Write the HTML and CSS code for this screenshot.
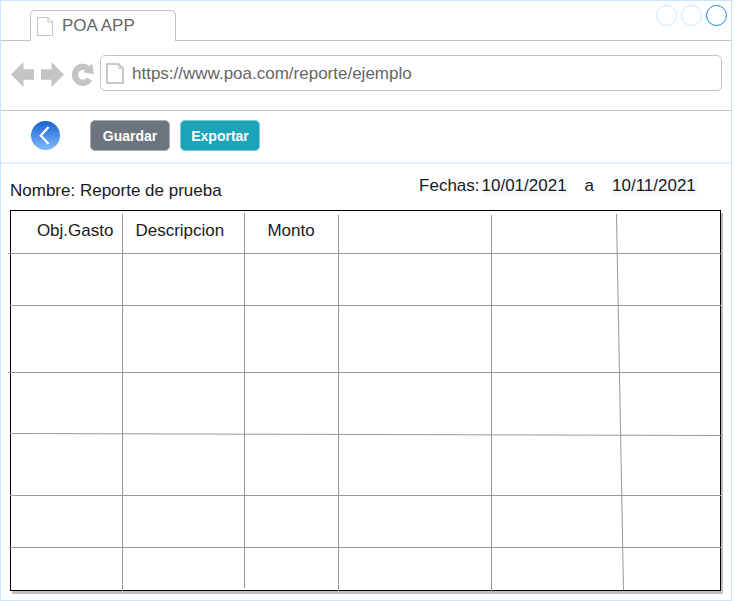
FILE: index.html
```html
<!DOCTYPE html>
<html lang="es">
<head>
<meta charset="utf-8">
<meta name="viewport" content="width=device-width, initial-scale=1">
<title>POA APP</title>
<link rel="stylesheet" href="styles.css">
</head>
<body>
<div class="window">
  <div class="tab-strip">
    <div class="tab">
      <svg class="tab-icon" width="16" height="19" viewBox="0 0 16 19" aria-hidden="true"><path d="M.5.5h10.500l4.500 4.500v13.500h-15zM11 .5v4.500h4.500" fill="#fff" stroke="#c4c4c4"/></svg>
      <span>POA APP</span>
    </div>
    <div class="window-controls">
      <button class="dot" type="button" aria-label="Minimizar"></button>
      <button class="dot" type="button" aria-label="Maximizar"></button>
      <button class="dot dot-active" type="button" aria-label="Cerrar"></button>
    </div>
  </div>

  <div class="nav-bar">
    <div class="nav-buttons">
      <button class="icon-button" type="button" aria-label="Atrás"><svg width="23" height="25" viewBox="0 0 23 25"><path d="M0 12.500L12.500 0v7.300H23v10.400H12.500V25z" fill="#c4c4c4"/></svg></button>
      <button class="icon-button" type="button" aria-label="Adelante"><svg width="23" height="25" viewBox="0 0 23 25"><path d="M23 12.500L10.500 0v7.300H0v10.400h10.500V25z" fill="#c4c4c4"/></svg></button>
      <button class="icon-button" type="button" aria-label="Recargar"><svg width="23" height="25" viewBox="0 0 23 25"><path d="M16.500 6.200A8 8 0 1 0 18.600 17.200" fill="none" stroke="#c4c4c4" stroke-width="6.200"/><path d="M21 1.600L22.900 12.300 12 10.300z" fill="#c4c4c4"/></svg></button>
    </div>
    <div class="address">
      <svg class="address-icon" width="18" height="21" viewBox="0 0 18 21" aria-hidden="true"><path d="M1 1h11.500L17 5.500V20H1z" fill="#fff" stroke="#c8c8c8" stroke-width="2"/><path d="M12.500 1v4.500H17" fill="none" stroke="#c8c8c8"/></svg>
      <input class="address-input" type="text" aria-label="Dirección" value="https://www.poa.com/reporte/ejemplo">
    </div>
  </div>

  <div class="toolbar">
    <button class="icon-button" type="button" aria-label="Volver"><svg width="29" height="29" viewBox="0 0 29 29"><defs><linearGradient id="back-fill" x1="0" y1="0" x2="0" y2="1"><stop offset="0" stop-color="#1661cf"/><stop offset="1" stop-color="#84b9ff"/></linearGradient></defs><circle cx="14.500" cy="14.500" r="14.500" fill="url(#back-fill)"/><path d="M17.600 6L9.800 14.500l7.800 8.500" fill="none" stroke="#fff" stroke-width="2.200"/></svg></button>
    <div class="actions">
      <button class="button button-save" type="button">Guardar</button>
      <button class="button button-export" type="button">Exportar</button>
    </div>
  </div>

  <main class="report">
    <div class="report-info">
      <div class="report-name">Nombre: Reporte de prueba</div>
      <div class="dates">
        <label for="date-from">Fechas:</label>
        <input class="date" id="date-from" type="text" value="10/01/2021">
        <label class="date-to-label" for="date-to">a</label>
        <input class="date" id="date-to" type="text" value="10/11/2021">
      </div>
    </div>

    <div class="sheet">
      <table class="grid">
        <colgroup><col class="col-code"><col class="col-description"><col class="col-amount"><col class="col-wide"><col class="col-medium"><col></colgroup>
        <thead>
          <tr class="row-head"><th class="right" scope="col">Obj.Gasto</th><th scope="col">Descripcion</th><th class="center" scope="col">Monto</th><td></td><td></td><td></td></tr>
        </thead>
        <tbody>
          <tr class="row-short"><td></td><td></td><td></td><td></td><td></td><td></td></tr>
          <tr class="row-tall"><td></td><td></td><td></td><td></td><td></td><td></td></tr>
          <tr class="row-medium"><td></td><td></td><td></td><td></td><td></td><td></td></tr>
          <tr class="row-medium"><td></td><td></td><td></td><td></td><td></td><td></td></tr>
          <tr class="row-short"><td></td><td></td><td></td><td></td><td></td><td></td></tr>
          <tr class="row-last"><td></td><td></td><td></td><td></td><td></td><td></td></tr>
        </tbody>
      </table>
      <!-- Hand-ruled grid lines: some overshoot the frame and two lean slightly -->
      <svg class="rules" viewBox="0 0 711 381" preserveAspectRatio="none" aria-hidden="true">
        <path d="M-2 43.500H712M0 95.500H711M-2 162.500H710M0 223.500L713 225.500M0 285.500H711M-1 337.500H711"/>
        <path d="M112.500 4V381M234.500 3V378M328.500 5V381M481.500 5V382M606.500 4L613.500 380"/>
      </svg>
    </div>
  </main>
</div>
</body>
</html>
```
FILE: styles.css
```css
* {
  box-sizing: border-box;
}

body {
  margin: 0;
  padding-right: 4px;
  background: #fff;
  color: #1a1a1a;
  font: 17px/20px "Liberation Sans", Arial, sans-serif;
}

button,
input {
  margin: 0;
  padding: 0;
  border: 0;
  background: none;
  color: inherit;
  font: inherit;
}

svg {
  display: block;
}

.window {
  min-height: 100vh;
  border: 1px solid #cce5ff;
}

.tab-strip {
  display: flex;
  justify-content: space-between;
  align-items: flex-start;
  height: 40px;
  padding: 0 4px 0 29px;
  border-bottom: 1px solid #c4c4c4;
}

.tab {
  display: flex;
  gap: 9px;
  width: 146px;
  height: 31px;
  margin-top: 9px;
  padding: 5px 6px;
  border: 1px solid #c4c4c4;
  border-bottom: 0;
  border-radius: 5px 5px 0 0;
  background: #fff;
  color: #666;
}

.tab-icon {
  margin-top: 1px;
}

.window-controls {
  display: flex;
  gap: 4px;
  padding-top: 4px;
}

.dot {
  width: 21px;
  height: 21px;
  border: 1px solid #cce5ff;
  border-radius: 50%;
}

.dot-active {
  border-color: #0c88f5;
}

.nav-bar {
  display: flex;
  align-items: center;
  gap: 6px;
  padding: 14px 9px 19px 10px;
  border-bottom: 1px solid #c4c4c4;
}

.nav-buttons {
  display: flex;
  gap: 7px;
  padding-top: 2px;
}

.address {
  display: flex;
  flex: 1;
  align-items: center;
  gap: 8px;
  height: 36px;
  padding: 0 5px;
  border: 1px solid #c4c4c4;
  border-radius: 5px;
}

.address-input {
  flex: 1;
  min-width: 0;
  height: 22px;
  padding-top: 2px;
  color: #666;
}

.toolbar {
  display: flex;
  align-items: center;
  gap: 30px;
  padding: 9px 30px 11px;
  border-bottom: 2px solid #e3f0ff;
}

.actions {
  display: flex;
  gap: 10px;
}

.button {
  width: 80px;
  height: 31px;
  border: 1px solid #a6adb3;
  border-radius: 5px;
  color: #fff;
  font-size: 14px;
  font-weight: bold;
}

.button-save {
  background: #6c757d;
}

.button-export {
  border-color: #7cc9d4;
  background: #1da4b8;
}

.report {
  padding: 0 10px 9px 9px;
}

.report-info {
  display: flex;
  justify-content: space-between;
  height: 46px;
}

.report-name {
  padding-top: 17px;
}

.dates {
  display: flex;
  align-items: flex-start;
  padding: 12px 24px 0 0;
}

.date {
  width: 85px;
  height: 20px;
  margin-left: 2px;
  background: #f8f9fa;
}

.date-to-label {
  margin: 0 16px 0 18px;
}

.sheet {
  position: relative;
  border: 1px solid #000;
  box-shadow: 2px 3px 0 #bfbfbf;
}

.grid {
  width: 100%;
  border-collapse: collapse;
  table-layout: fixed;
}

.grid th {
  padding: 0 11px 4px;
  font-weight: normal;
  text-align: left;
}

.grid .right {
  text-align: right;
}

.grid .center {
  text-align: center;
}

.grid td {
  padding: 0;
}

.col-code {
  width: 16%;
}

.col-description {
  width: 17%;
}

.col-amount {
  width: 13%;
}

.col-wide {
  width: 22%;
}

.col-medium {
  width: 18%;
}

.row-head {
  height: 43px;
}

.row-short {
  height: 52px;
}

.row-tall {
  height: 67px;
}

.row-medium {
  height: 61px;
}

.row-last {
  height: 43px;
}

.rules {
  position: absolute;
  top: -1px;
  left: -1px;
  width: calc(100% + 2px);
  height: calc(100% + 2px);
  overflow: visible;
  fill: none;
  pointer-events: none;
  stroke: #999;
}

.rules path {
  vector-effect: non-scaling-stroke;
}
```
